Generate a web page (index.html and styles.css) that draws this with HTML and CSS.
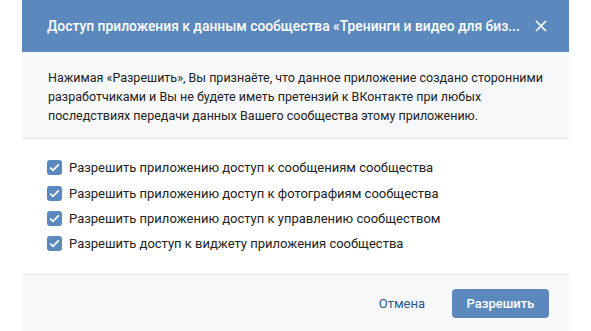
FILE: index.html
```html
<!DOCTYPE html>
<html lang="ru">
<head>
    <meta charset="UTF-8">
    <title>Доступ приложения</title>
    <link rel="stylesheet" href="styles.css">
</head>
<body>
    <div class="dialog">
        <div class="dialog-head">
            <span class="dialog-title">Доступ приложения к данным сообщества «Тренинги и видео для биз...</span>
            <svg class="close" width="12" height="12" viewBox="0 0 12 12"><path d="M1 1L11 11M11 1L1 11" stroke="#fff" stroke-width="1.7" fill="none"/></svg>
        </div>
        <div class="notice">
            Нажимая «Разрешить», Вы признаёте, что данное приложение создано сторонними разработчиками и Вы не будете иметь претензий к ВКонтакте при любых последствиях передачи данных Вашего сообщества этому приложению.
        </div>
        <div class="perms">
            <label class="perm"><span class="box"><svg width="11" height="9" viewBox="0 0 11 9"><path d="M1.2 4.6L4 7.3L9.8 1.4" stroke="#fff" stroke-width="1.8" fill="none"/></svg></span>Разрешить приложению доступ к сообщениям сообщества</label>
            <label class="perm"><span class="box"><svg width="11" height="9" viewBox="0 0 11 9"><path d="M1.2 4.6L4 7.3L9.8 1.4" stroke="#fff" stroke-width="1.8" fill="none"/></svg></span>Разрешить приложению доступ к фотографиям сообщества</label>
            <label class="perm"><span class="box"><svg width="11" height="9" viewBox="0 0 11 9"><path d="M1.2 4.6L4 7.3L9.8 1.4" stroke="#fff" stroke-width="1.8" fill="none"/></svg></span>Разрешить приложению доступ к управлению сообществом</label>
            <label class="perm"><span class="box"><svg width="11" height="9" viewBox="0 0 11 9"><path d="M1.2 4.6L4 7.3L9.8 1.4" stroke="#fff" stroke-width="1.8" fill="none"/></svg></span>Разрешить доступ к виджету приложения сообщества</label>
        </div>
        <div class="dialog-foot">
            <a class="cancel" href="#">Отмена</a>
            <button class="allow">Разрешить</button>
        </div>
    </div>
</body>
</html>
```

FILE: styles.css
```css
body { margin: 0; background: #fff; font-family: Roboto, Arial, sans-serif; color: #222; }
.dialog { width: 547px; margin-left: 22px; }
.dialog-head { height: 52px; background: #5b88bd; display: flex; align-items: center; justify-content: space-between; padding: 0 22px 0 25px; box-sizing: border-box; }
.dialog-title { color: #fff; font-size: 13.85px; font-weight: 500; white-space: nowrap; }
.notice { background: #f7f8fa; padding: 16px 20px 13px 26px; font-size: 12.5px; line-height: 19px; border-bottom: 1px solid #e4e6ea; }
.perms { padding: 16px 25px 17px; border-bottom: 1px solid #e4e6ea; }
.perm { display: flex; align-items: center; height: 25.4px; font-size: 13px; color: #222; }
.box { width: 15px; height: 15px; border-radius: 3px; background: #5b88bd; display: flex; align-items: center; justify-content: center; margin-right: 7px; }
.dialog-foot { background: #f7f8fa; height: 60px; display: flex; align-items: flex-start; justify-content: flex-end; padding: 14px 20px 0 0; box-sizing: border-box; }
.cancel { color: #2a5885; text-decoration: none; font-size: 13px; line-height: 29px; margin-right: 27px; }
.allow { height: 29px; width: 97px; background: #5b88bd; color: #fff; border: none; border-radius: 4px; font-family: Roboto, Arial, sans-serif; font-size: 13px; font-weight: 500; cursor: pointer; }
```
